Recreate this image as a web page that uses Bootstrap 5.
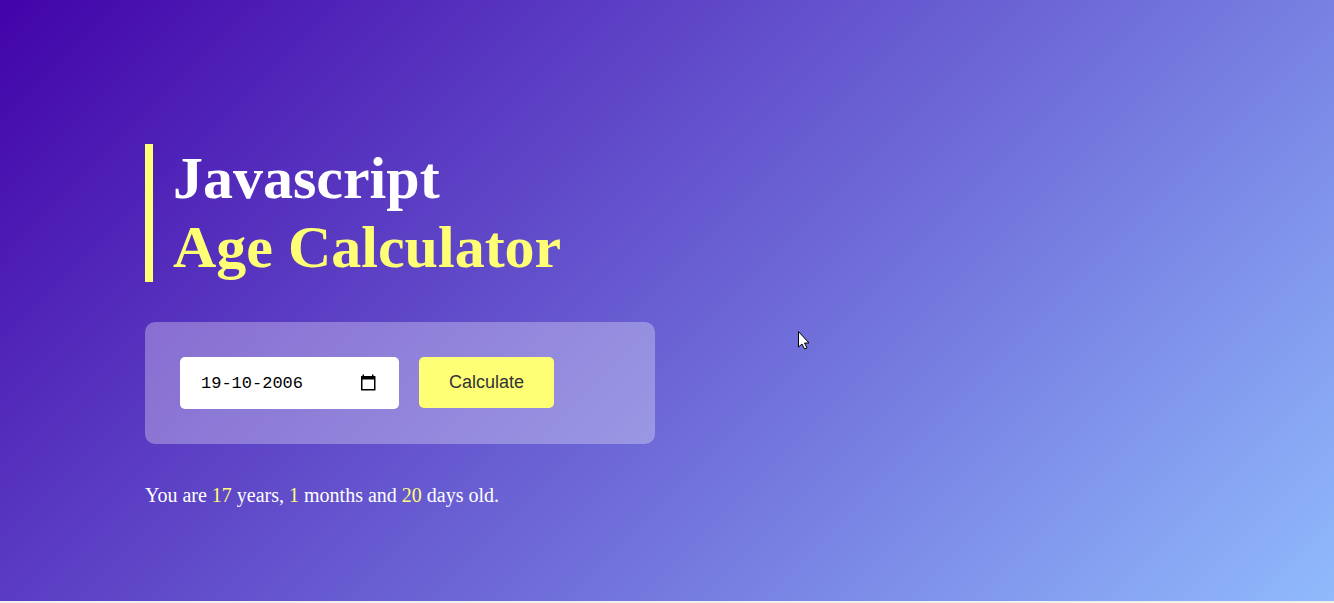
<!DOCTYPE html>
<html lang="en">
<head>
<meta charset="utf-8">
<meta name="viewport" content="width=device-width, initial-scale=1">
<title>Age Calculator</title>
<link href="https://cdn.jsdelivr.net/npm/bootstrap@5.3.0/dist/css/bootstrap.min.css" rel="stylesheet">
<style>
:root { --accent: #ffff76; }
body { font-family: "Liberation Serif", serif; background: #f0f0f0; }
.hero { background: linear-gradient(135deg, #4203a9, #90bafc); padding: 144px 16px 88px; margin-bottom: 2px; min-height: calc(100vh - 2px); }
.calculator { max-width: 510px; margin-left: 129px; }
.accent { color: var(--accent); }
.title { font-size: 60px; line-height: 69px; border-left: 8px solid var(--accent); padding-left: 20px; margin-bottom: 40px; }
.input-box { background: rgba(255, 255, 255, .3); border-radius: 10px; padding: 35px; gap: 20px; margin-bottom: 40px; }
.date-field { width: 219px; }
.date-field .form-control { height: 52px; padding: 3px 50px 3px 21px; border: 0; border-radius: 5px; color: #000; font: 17px "Liberation Mono", monospace; }
.picker { right: 22px; top: 17px; line-height: 0; }
.calc-btn { height: 51px; padding: 0 30px; border: 0; border-radius: 5px; font: 18px "Liberation Sans", sans-serif; --bs-btn-color: #333; --bs-btn-bg: var(--accent); --bs-btn-hover-bg: #f2f268; }
.result { font-size: 20px; line-height: 23px; }
.pointer { left: 798px; top: 330px; }
@media (max-width: 900px) { .calculator { margin-left: auto; margin-right: auto; } .pointer { display: none; } }
</style>
</head>
<body>
<main class="hero">
  <div class="calculator text-white">
    <h1 class="title fw-bold">Javascript<br><span class="accent">Age Calculator</span></h1>
    <form class="input-box d-flex flex-wrap align-items-start">
      <div class="date-field position-relative">
        <input type="text" class="form-control" id="date" value="19-10-2006" aria-label="Date of birth">
        <button type="button" class="picker btn p-0 border-0 position-absolute" aria-label="Open calendar">
          <svg width="18" height="18" viewBox="0 0 18 18"><path fill="#000" fill-rule="evenodd" d="M3.500 0.500h1.500V2h8V.5h1.500V2h1.500q.5 0 .5.500v13.500q0 .5-.5.500H2.500q-.5 0-.5-.5V2.500q0-.5.500-.5h1zM3.500 5.500v9.500h11.500V5.500z"/></svg>
        </button>
      </div>
      <button type="button" class="calc-btn btn">Calculate</button>
    </form>
    <p class="result mb-0">You are <span class="accent">17</span> years, <span class="accent">1</span> months and <span class="accent">20</span> days old.</p>
  </div>
</main>
<svg class="pointer position-absolute" width="13" height="21" viewBox="0 0 13 21" aria-hidden="true"><path d="M.5 1.500v15.500l3.500-3 2.500 5 2.500-1-2.500-5H11z" fill="#fff" stroke="#000"/></svg>
<script src="https://cdn.jsdelivr.net/npm/bootstrap@5.3.0/dist/js/bootstrap.bundle.min.js"></script>
</body>
</html>
